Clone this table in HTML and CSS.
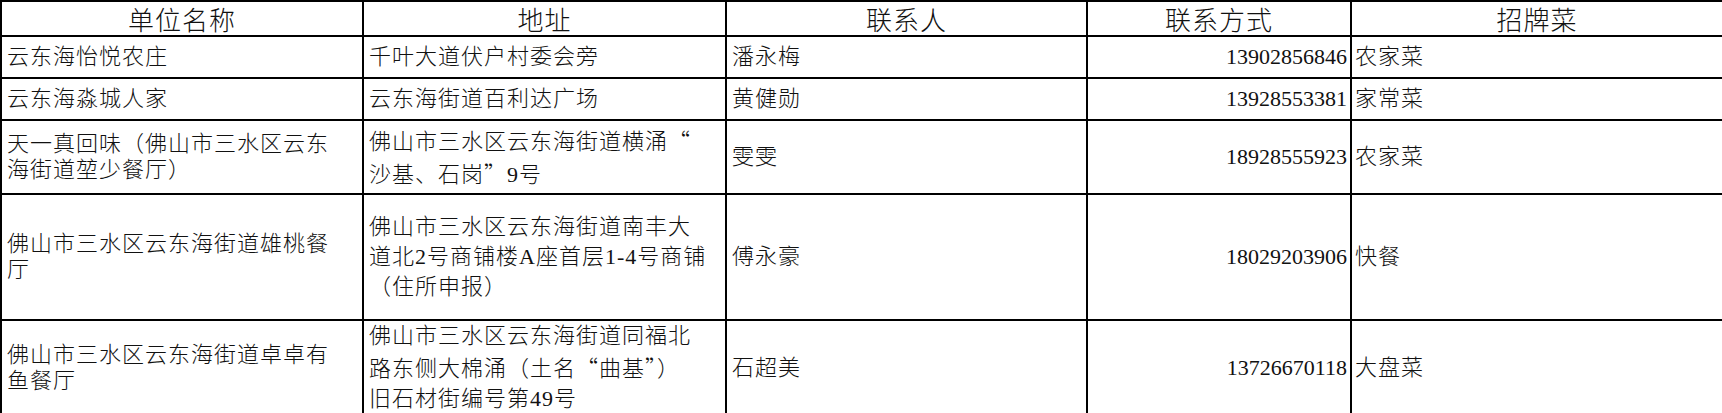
FILE: index.html
```html
<!DOCTYPE html>
<html lang="zh-CN">
<head>
<meta charset="utf-8">
<title>招牌菜</title>
<link rel="stylesheet" href="styles.css">
</head>
<body>
<table class="sheet">
  <colgroup>
    <col class="c-name">
    <col class="c-addr">
    <col class="c-person">
    <col class="c-phone">
    <col class="c-dish">
  </colgroup>
  <thead>
    <tr class="r-head">
      <th>单位名称</th>
      <th>地址</th>
      <th>联系人</th>
      <th>联系方式</th>
      <th>招牌菜</th>
    </tr>
  </thead>
  <tbody>
    <tr class="r-1">
      <td class="name">云东海怡悦农庄</td>
      <td class="addr">千叶大道伏户村委会旁</td>
      <td class="person">潘永梅</td>
      <td class="phone">13902856846</td>
      <td class="dish">农家菜</td>
    </tr>
    <tr class="r-2">
      <td class="name">云东海淼城人家</td>
      <td class="addr">云东海街道百利达广场</td>
      <td class="person">黄健勋</td>
      <td class="phone">13928553381</td>
      <td class="dish">家常菜</td>
    </tr>
    <tr class="r-3">
      <td class="name">天一真回味（佛山市三水区云东<br>海街道堃少餐厅）</td>
      <td class="addr">佛山市三水区云东海街道横涌<span class="q">“</span><br><span class="q">沙基、石岗”</span>9号</td>
      <td class="person">雯雯</td>
      <td class="phone">18928555923</td>
      <td class="dish">农家菜</td>
    </tr>
    <tr class="r-4">
      <td class="name">佛山市三水区云东海街道雄桃餐<br>厅</td>
      <td class="addr">佛山市三水区云东海街道南丰大<br>道北2号商铺楼A座首层1-4号商铺<br>（住所申报）</td>
      <td class="person">傅永豪</td>
      <td class="phone">18029203906</td>
      <td class="dish">快餐</td>
    </tr>
    <tr class="r-5">
      <td class="name">佛山市三水区云东海街道卓卓有<br>鱼餐厅</td>
      <td class="addr">佛山市三水区云东海街道同福北<br>路东侧大棉涌（土名<span class="q">“曲基”</span>）<br>旧石材街编号第49号</td>
      <td class="person">石超美</td>
      <td class="phone">13726670118</td>
      <td class="dish">大盘菜</td>
    </tr>
  </tbody>
</table>
</body>
</html>
```

FILE: styles.css
```css
html, body {
  margin: 0;
  padding: 0;
  background: #ffffff;
}

.sheet {
  border-collapse: collapse;
  table-layout: fixed;
  width: 1722px;
  font-family: "Liberation Serif", "Noto Sans CJK SC", serif;
  color: #111111;
}

.c-name { width: 362px; }
.c-addr { width: 363px; }
.c-person { width: 361px; }
.c-phone { width: 264px; }
.c-dish { width: 372px; }

.sheet th,
.sheet td {
  border: 2px solid #000000;
  padding: 0 5px;
  white-space: nowrap;
}

.sheet th {
  font-family: "Noto Sans CJK SC", sans-serif;
  font-weight: 300;
  font-size: 26px;
  letter-spacing: 1px;
  line-height: 33px;
  text-align: center;
  vertical-align: bottom;
  padding-bottom: 0;
}

.sheet td {
  font-size: 22px;
  font-weight: 300;
  letter-spacing: 1px;
  vertical-align: middle;
  text-align: left;
  line-height: 26px;
}

.sheet td.name { line-height: 26px; }
.sheet td.addr { line-height: 30px; }

.q {
  font-family: "Noto Sans CJK SC", sans-serif;
  font-feature-settings: "fwid" 1;
}

.sheet td.phone {
  text-align: right;
  letter-spacing: 0;
  font-size: 22px;
  font-weight: 400;
  padding-right: 3px;
}

.sheet td.dish { padding-left: 3px; }

.r-head { height: 35px; }
.r-1 { height: 42px; }
.r-2 { height: 42px; }
.r-3 { height: 74px; }
.r-4 { height: 126px; }
.r-5 { height: 93px; }
```
